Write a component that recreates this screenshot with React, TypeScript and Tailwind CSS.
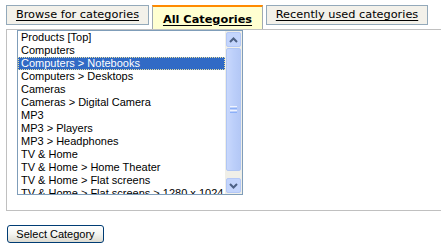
import React from "react";

const rows = [
  "Products [Top]",
  "Computers",
  "Computers > Notebooks",
  "Computers > Desktops",
  "Cameras",
  "Cameras > Digital Camera",
  "MP3",
  "MP3 > Players",
  "MP3 > Headphones",
  "TV & Home",
  "TV & Home > Home Theater",
  "TV & Home > Flat screens",
  "TV & Home > Flat screens > 1280 x 1024",
];

function Arrow({ up }: { up: boolean }) {
  return (
    <svg width="9" height="6" viewBox="0 0 9 6" className="block">
      <path
        d={up ? "M1 5 L4.5 1.5 L8 5" : "M1 1 L4.5 4.5 L8 1"}
        fill="none"
        stroke="#4d6185"
        strokeWidth="2"
      />
    </svg>
  );
}

export default function App() {
  return (
    <div className="w-[441px] h-[249px] bg-white overflow-hidden relative">
      {/* Tabs */}
      <div
        className="flex items-start pl-[6px] pt-[5px] gap-[3px] text-[11.3px] text-black"
        style={{ fontFamily: '"DejaVu Sans", Verdana, sans-serif' }}
      >
        <div className="w-[143px] h-[20px] border border-[#93a9ba] bg-[#f3f1ea] flex items-center justify-center pt-[1px]">
          <span className="underline underline-offset-[2px] whitespace-nowrap">Browse for categories</span>
        </div>
        <div className="relative z-10 w-[111px] h-[24px] border-x border-[#a0aab2] border-t-2 border-t-[#ff8a00] bg-[#ffffd1] flex items-center justify-center pt-[4px]">
          <span className="underline underline-offset-[2px] font-bold whitespace-nowrap">All Categories</span>
        </div>
        <div className="w-[162px] h-[20px] border border-[#93a9ba] bg-[#f3f1ea] flex items-center justify-center pt-[1px]">
          <span className="underline underline-offset-[2px] whitespace-nowrap">Recently used categories</span>
        </div>
      </div>

      {/* Content box */}
      <div className="ml-[6px] h-[182px] border border-r-0 border-[#c0c0c0] pl-[10px]">
        <div className="w-[226px] h-[165px] border border-[#7f9db9] flex overflow-hidden bg-white">
          <div
            className="flex-1 overflow-hidden text-[11px] leading-[13px] text-black"
            style={{ fontFamily: '"Liberation Sans", Arial, sans-serif' }}
          >
            {rows.map((r, i) => (
              <div
                key={i}
                className={
                  "h-[13px] pl-[3px] whitespace-nowrap " +
                  (i === 2
                    ? "bg-[#316ac5] text-white outline outline-1 outline-dotted outline-[#e8e0a0] -outline-offset-1"
                    : "")
                }
              >
                {r}
              </div>
            ))}
          </div>
          {/* Scrollbar */}
          <div className="w-[17px] bg-[#f0efe8] flex flex-col pt-[1px] items-center">
            <div className="w-[15px] h-[15px] rounded-[2px] border border-[#b4c8f6] bg-[#c4d5fc] flex items-center justify-center">
              <Arrow up />
            </div>
            <div className="mt-[1px] w-[15px] h-[123px] rounded-[2px] border border-[#b0c6f4] bg-gradient-to-r from-[#c9d8fc] via-[#bccffa] to-[#b4c8f6] flex flex-col items-center justify-center gap-[1px]">
              <div className="w-[7px] h-[1px] bg-[#eef3fe]" />
              <div className="w-[7px] h-[1px] bg-[#8cb0f8]" />
              <div className="w-[7px] h-[1px] bg-[#eef3fe]" />
              <div className="w-[7px] h-[1px] bg-[#8cb0f8]" />
            </div>
            <div className="h-[7px]" />
            <div className="w-[15px] h-[15px] rounded-[2px] border border-[#b4c8f6] bg-[#c4d5fc] flex items-center justify-center">
              <Arrow up={false} />
            </div>
          </div>
        </div>
      </div>

      {/* Button */}
      <button
        className="ml-[7px] mt-[14px] w-[97px] h-[18px] border border-[#003c74] rounded-[3px] bg-gradient-to-b from-[#ffffff] via-[#f4f4f0] to-[#dcdad0] text-[11px] leading-[14px] text-black flex items-center justify-center"
        style={{ fontFamily: '"Liberation Sans", Arial, sans-serif' }}
      >
        Select Category
      </button>
    </div>
  );
}
